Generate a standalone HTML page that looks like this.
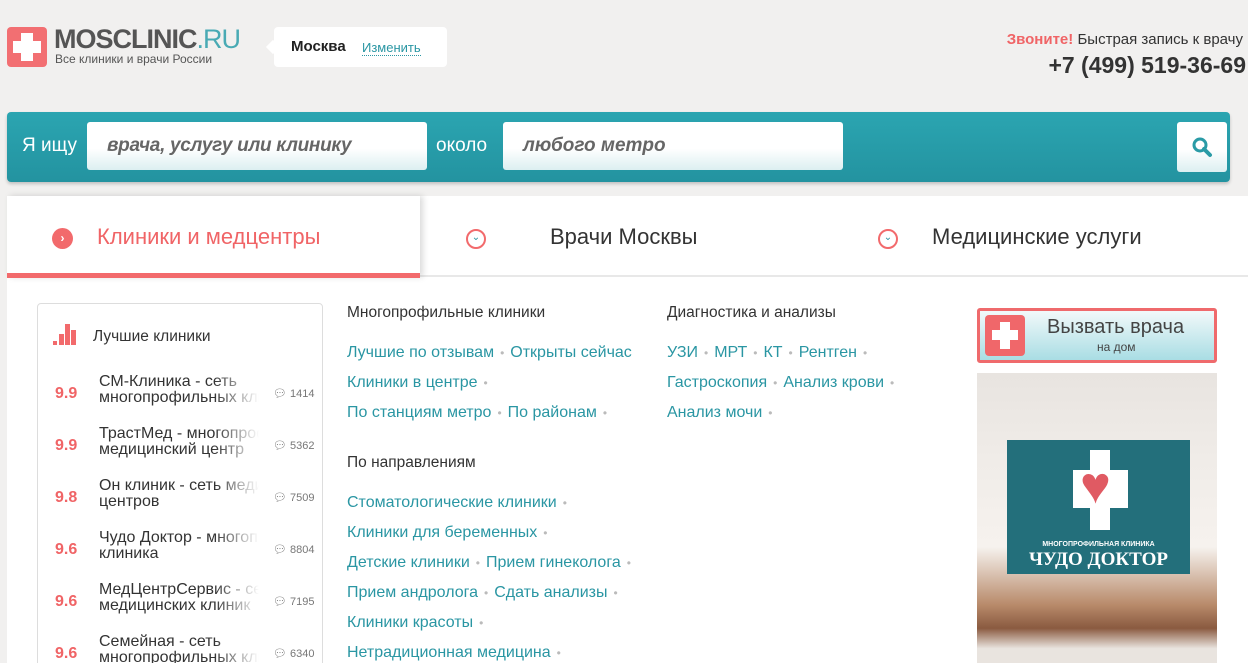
<!DOCTYPE html>
<html style="overflow:hidden;height:663px"><head><meta charset="utf-8"><style>
*{margin:0;padding:0;box-sizing:border-box}
body{width:1248px;height:663px;overflow:hidden;background:#f1f0ef;font-family:"Liberation Sans",sans-serif;position:relative;color:#333}
.abs{position:absolute}
.link{color:#2a96a3;font-size:16px;white-space:nowrap}
.dot{color:#bbb;font-size:12px;margin:0 6px}
.hd{font-size:15.5px;color:#333}
.row{position:absolute;left:37px;width:286px;height:52px}
.sc{position:absolute;left:18px;top:17px;color:#f06466;font-weight:bold;font-size:16px}
.nm{position:absolute;left:62px;top:6px;font-size:16px;line-height:16px;color:#333;width:160px;white-space:nowrap;overflow:hidden;-webkit-mask-image:linear-gradient(90deg,#000 72%,transparent);}
.cnt{position:absolute;left:236px;top:19px;font-size:11px;color:#777}
</style></head><body>
<div class="abs" style="left:7px;top:27px;width:40px;height:40px;background:#f26f72;border-radius:4px"></div>
<div class="abs" style="left:21px;top:33px;width:12px;height:28px;background:#fff"></div>
<div class="abs" style="left:13px;top:41px;width:28px;height:12px;background:#fff"></div>
<div class="abs" style="left:54px;top:24px;font-size:27px;font-weight:bold;color:#555;letter-spacing:-1px">MOSCLINIC<span style="font-weight:normal;color:#49aab4">.RU</span></div>
<div class="abs" style="left:55px;top:52px;font-size:12px;color:#555">Все клиники и врачи России</div>
<div class="abs" style="left:274px;top:27px;width:173px;height:40px;background:#fff;border-radius:4px"></div>
<div class="abs" style="left:268px;top:42px;width:10px;height:10px;background:#fff;transform:rotate(45deg)"></div>
<div class="abs" style="left:291px;top:38px;font-size:15px;font-weight:bold;color:#222">Москва</div>
<div class="abs" style="left:362px;top:40px;font-size:13px;color:#2a96a3;border-bottom:1px dotted #2a96a3">Изменить</div>
<div class="abs" style="right:5px;top:31px;font-size:15px;color:#333"><b style="color:#f06466">Звоните!</b> Быстрая запись к врачу</div>
<div class="abs" style="right:2px;top:52px;font-size:23px;font-weight:bold;color:#333">+7 (499) 519-36-69</div>
<div class="abs" style="left:7px;top:112px;width:1223px;height:70px;background:linear-gradient(#2ba5b1,#2393a0);border-radius:4px;box-shadow:0 2px 3px rgba(0,0,0,.2)"></div>
<div class="abs" style="left:22px;top:135px;color:#fff;font-size:19px">Я ищу</div>
<div class="abs" style="left:87px;top:122px;width:340px;height:48px;background:linear-gradient(#fff 55%,#dceff1);border-radius:3px"></div>
<div class="abs" style="left:107px;top:135px;color:#666;font-size:19px;font-style:italic;font-weight:bold;letter-spacing:-0.3px">врача, услугу или клинику</div>
<div class="abs" style="left:436px;top:135px;color:#fff;font-size:19px">около</div>
<div class="abs" style="left:503px;top:122px;width:340px;height:48px;background:linear-gradient(#fff 55%,#dceff1);border-radius:3px"></div>
<div class="abs" style="left:523px;top:135px;color:#666;font-size:19px;font-style:italic;font-weight:bold">любого метро</div>
<div class="abs" style="left:1177px;top:122px;width:50px;height:50px;background:linear-gradient(#fff 55%,#dceff1);border-radius:3px"></div>
<svg class="abs" style="left:1190px;top:135px" width="24" height="24"><circle cx="10" cy="10" r="6" fill="none" stroke="#2a9ba6" stroke-width="3"/><path d="M14 14l6 6" stroke="#2a9ba6" stroke-width="4" stroke-linecap="round"/></svg>
<div class="abs" style="left:7px;top:196px;width:1241px;height:467px;background:#fff"></div>
<div class="abs" style="left:420px;top:275px;width:828px;height:2px;background:#e8e8e8"></div>
<div class="abs" style="left:7px;top:196px;width:413px;height:81px;background:#fff;box-shadow:3px 0 6px rgba(0,0,0,.15)"></div>
<div class="abs" style="left:7px;top:273px;width:413px;height:5px;background:#f26a6c"></div>
<div class="abs" style="left:52px;top:228px;width:21px;height:21px;border-radius:50%;background:#f26a6c;color:#fff;font-size:12px;text-align:center;line-height:20px;font-weight:bold">›</div>
<div class="abs" style="left:97px;top:224px;font-size:22px;color:#f06466">Клиники и медцентры</div>
<div class="abs" style="left:466px;top:229px;width:20px;height:20px;border-radius:50%;border:2px solid #f26a6c;color:#2a96a3;font-size:10px;text-align:center;line-height:14px">⌄</div>
<div class="abs" style="left:550px;top:224px;font-size:22px;color:#333">Врачи Москвы</div>
<div class="abs" style="left:878px;top:229px;width:20px;height:20px;border-radius:50%;border:2px solid #f26a6c;color:#2a96a3;font-size:10px;text-align:center;line-height:14px">⌄</div>
<div class="abs" style="left:932px;top:224px;font-size:22px;color:#333">Медицинские услуги</div>
<div class="abs" style="left:37px;top:303px;width:286px;height:380px;border:1px solid #ddd;border-radius:4px"></div>
<svg class="abs" style="left:53px;top:324px" width="24" height="22"><rect x="0" y="17" width="4" height="4" fill="#f26a6c"/><rect x="6" y="10" width="5" height="11" fill="#f26a6c"/><rect x="12" y="0" width="5" height="21" fill="#f26a6c"/><rect x="18" y="6" width="5" height="15" fill="#f26a6c"/></svg>
<div class="abs" style="left:93px;top:328px;font-size:15.5px;color:#333">Лучшие клиники</div>
<div class="row" style="top:368px"><div class="sc">9.9</div><div class="nm">СМ-Клиника - сеть<br>многопрофильных клиник</div><div class="cnt">💬︎ 1414</div></div>
<div class="row" style="top:420px"><div class="sc">9.9</div><div class="nm">ТрастМед - многопрофильный<br>медицинский центр</div><div class="cnt">💬︎ 5362</div></div>
<div class="row" style="top:472px"><div class="sc">9.8</div><div class="nm">Он клиник - сеть медицинских<br>центров</div><div class="cnt">💬︎ 7509</div></div>
<div class="row" style="top:524px"><div class="sc">9.6</div><div class="nm">Чудо Доктор - многопрофильная<br>клиника</div><div class="cnt">💬︎ 8804</div></div>
<div class="row" style="top:576px"><div class="sc">9.6</div><div class="nm">МедЦентрСервис - сеть<br>медицинских клиник</div><div class="cnt">💬︎ 7195</div></div>
<div class="row" style="top:628px"><div class="sc">9.6</div><div class="nm">Семейная - сеть<br>многопрофильных клиник</div><div class="cnt">💬︎ 6340</div></div>
<div class="abs hd" style="left:347px;top:304px">Многопрофильные клиники</div>
<div class="abs link" style="left:347px;top:344px">Лучшие по отзывам<span class="dot">•</span>Открыты сейчас</div>
<div class="abs link" style="left:347px;top:374px">Клиники в центре<span class="dot">•</span></div>
<div class="abs link" style="left:347px;top:404px">По станциям метро<span class="dot">•</span>По районам<span class="dot">•</span></div>
<div class="abs hd" style="left:347px;top:454px">По направлениям</div>
<div class="abs link" style="left:347px;top:494px">Стоматологические клиники<span class="dot">•</span></div>
<div class="abs link" style="left:347px;top:524px">Клиники для беременных<span class="dot">•</span></div>
<div class="abs link" style="left:347px;top:554px">Детские клиники<span class="dot">•</span>Прием гинеколога<span class="dot">•</span></div>
<div class="abs link" style="left:347px;top:584px">Прием андролога<span class="dot">•</span>Сдать анализы<span class="dot">•</span></div>
<div class="abs link" style="left:347px;top:614px">Клиники красоты<span class="dot">•</span></div>
<div class="abs link" style="left:347px;top:644px">Нетрадиционная медицина<span class="dot">•</span></div>
<div class="abs hd" style="left:667px;top:304px">Диагностика и анализы</div>
<div class="abs link" style="left:667px;top:344px">УЗИ<span class="dot">•</span>МРТ<span class="dot">•</span>КТ<span class="dot">•</span>Рентген<span class="dot">•</span></div>
<div class="abs link" style="left:667px;top:374px">Гастроскопия<span class="dot">•</span>Анализ крови<span class="dot">•</span></div>
<div class="abs link" style="left:667px;top:404px">Анализ мочи<span class="dot">•</span></div>
<div class="abs" style="left:977px;top:308px;width:240px;height:55px;border:3px solid #ef6a6c;border-radius:3px;background:linear-gradient(#f2f9fa,#a9dde4)"></div>
<div class="abs" style="left:985px;top:315px;width:40px;height:41px;background:#f0676a;border-radius:4px"></div>
<div class="abs" style="left:1000px;top:322px;width:10px;height:27px;background:#fff"></div>
<div class="abs" style="left:992px;top:330px;width:26px;height:10px;background:#fff"></div>
<div class="abs" style="left:1047px;top:316px;font-size:20px;color:#444">Вызвать врача</div>
<div class="abs" style="left:1097px;top:340px;font-size:12px;color:#444">на дом</div>
<div class="abs" style="left:977px;top:373px;width:240px;height:290px;background:linear-gradient(#e8e4e0 0,#f0ece8 30%,#f6f2ee 60%,#b88a6a 80%,#8a5a40 88%,#e9e4df 95%)"></div>
<div class="abs" style="left:1007px;top:440px;width:183px;height:134px;background:#236f7b"></div>
<div class="abs" style="left:1090px;top:450px;width:20px;height:80px;background:#fff"></div>
<div class="abs" style="left:1073px;top:470px;width:55px;height:38px;background:#fff"></div>
<div class="abs" style="left:1080px;top:456px;font-size:52px;color:#e05a63;line-height:60px">♥</div>
<div class="abs" style="left:1007px;top:541px;width:183px;text-align:center;font-size:7px;font-weight:bold;color:#fff">МНОГОПРОФИЛЬНАЯ КЛИНИКА</div>
<div class="abs" style="left:1007px;top:549px;width:183px;text-align:center;font-size:19px;font-weight:bold;font-family:'Liberation Serif',serif;color:#fff">ЧУДО ДОКТОР</div>
</body></html>
